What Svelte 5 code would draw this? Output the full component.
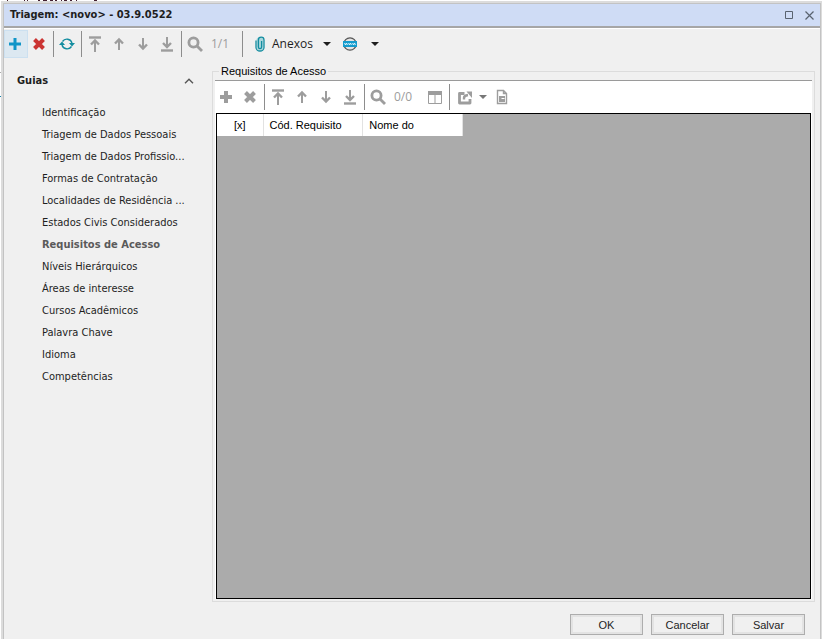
<script>
  const tabs = [
    'Identificação',
    'Triagem de Dados Pessoais',
    'Triagem de Dados Profissio...',
    'Formas de Contratação',
    'Localidades de Residência ...',
    'Estados Civis Considerados',
    'Requisitos de Acesso',
    'Níveis Hierárquicos',
    'Áreas de interesse',
    'Cursos Acadêmicos',
    'Palavra Chave',
    'Idioma',
    'Competências'
  ];
  let current = $state('Requisitos de Acesso');
  let open = $state(true);
</script>

{#snippet icon(name)}
  <svg width="16" height="16" viewBox="0 0 16 16" fill="none" stroke="currentColor" aria-hidden="true">
    {#if name === 'plus'}
      <path d="M8 2v12M2 8h12" stroke-width="3" />
    {:else if name === 'plusBold'}
      <path d="M8 2v12M2 8h12" stroke-width="4" />
    {:else if name === 'cross'}
      <path d="M3.5 3.5l9 9M12.5 3.5l-9 9" stroke-width="4" />
    {:else if name === 'refresh'}
      <path d="M3.500 5.500A5.300 5.300 0 0 1 13 7M12.500 10.500A5.300 5.300 0 0 1 3 9" stroke-width="1.400" />
      <path d="M10 7h6l-3 3.600zM0 9h6L3 5.400z" fill="currentColor" stroke="none" />
    {:else if name === 'first'}
      <path d="M2 1.500h12" stroke-width="2.400" />
      <path d="M8 4v12" stroke-width="2" />
      <path d="M4 8.500L8 4.500l4 4" stroke-width="2.400" />
    {:else if name === 'up'}
      <path d="M8 3v11" stroke-width="2" />
      <path d="M4 7.500L8 3.500l4 4" stroke-width="2.400" />
    {:else if name === 'down'}
      <path d="M8 2v11" stroke-width="2" />
      <path d="M4 8.500l4 4 4-4" stroke-width="2.400" />
    {:else if name === 'last'}
      <path d="M8 1v10" stroke-width="2" />
      <path d="M4 7l4 4 4-4" stroke-width="2.400" />
      <path d="M2 14.500h12" stroke-width="2.400" />
    {:else if name === 'search'}
      <circle cx="6.500" cy="6.500" r="4.600" stroke-width="2.800" />
      <path d="M10 10l5 5" stroke-width="2.800" />
    {:else if name === 'clip'}
      <path d="M4.500 4.500v6.500a3.500 3.500 0 0 0 7 0V4a2.500 2.500 0 0 0-2.500-2.500h-2A2.500 2.500 0 0 0 4.500 4z" fill="#a9d6dc" stroke="none" />
      <path d="M4 4.500V11.500a4 3.500 0 0 0 8 0V4a2.800 2.800 0 0 0-5.600 0v7a1.600 1.600 0 0 0 3.200 0V5" stroke-width="1.300" />
    {:else if name === 'web'}
      <circle cx="8" cy="8" r="6.200" fill="#e4e4e4" stroke="#555" stroke-width="1.200" />
      <path d="M1 5h14v6H1z" fill="#149cce" stroke="none" />
      <path d="M2.500 7l1 2 1-2 1 2M6.500 7l1 2 1-2 1 2M10.500 7l1 2 1-2 1 2" stroke="#fff" stroke-width=".8" />
    {:else if name === 'columns'}
      <path d="M1.500 2.500h13v12h-13zM8 5v9" />
      <path d="M1 2h14v4H1z" fill="currentColor" stroke="none" />
    {:else if name === 'export'}
      <path d="M7.500 4.500H2.500v9.500h10.500v-4" stroke-width="2.800" stroke-linejoin="round" />
      <path d="M7 10.500V9q0-2.500 4-3" stroke-width="2.400" />
      <path d="M9.500 2.500H15V9z" fill="currentColor" stroke="none" />
    {:else if name === 'report'}
      <path d="M3.500 1.500h6l3 3v10h-9zM9.500 1.500v3h3" stroke-width="1.400" />
      <path d="M5 7h6v6H5z" fill="currentColor" stroke="none" />
      <path d="M7.500 9.500h3" stroke="#fff" />
    {/if}
  </svg>
{/snippet}

{#snippet arrow()}
  <svg width="8" height="4" viewBox="0 0 8 4" aria-hidden="true"><path d="M0 0h8L4 4z" fill="currentColor" /></svg>
{/snippet}

{#snippet tool(name, label, tone)}
  <button type="button" class="tool {tone}" aria-label={label}>{@render icon(name)}</button>
{/snippet}

<div class="backdrop">
  <svg class="behind" width="100" height="98" viewBox="0 0 100 98" aria-hidden="true">
    <path d="M7 .5h1M24 .5h1M27 .5h1M38 .5h2M43 .5h4M50 .5h3M55 .5h2M61 .5h1M64 .5h3M70 .5h2M76 .5h1M94 .5h3" stroke="#432030" />
    <path d="M0 72.500h1" stroke="#aaa" />
    <path d="M0 96.500h1" stroke="#1580a8" />
  </svg>
  <main class="window">
    <header class="title">
      <h1>Triagem: &lt;novo&gt; - 03.9.0522</h1>
      <button type="button" aria-label="Maximizar">
        <svg width="9" height="9" viewBox="0 0 9 9"><path d="M.5 .5h7v7h-7z" fill="none" stroke="#59636f" /></svg>
      </button>
      <button type="button" aria-label="Fechar">
        <svg width="9" height="9" viewBox="0 0 9 9"><path d="M.5 .5l8 8M8.500 .5l-8 8" stroke="#59636f" stroke-width="1.200" /></svg>
      </button>
    </header>

    <div class="toolbar" role="toolbar" aria-label="Registro">
      {@render tool('plus', 'Novo', 'blue active')}
      {@render tool('cross', 'Excluir', 'red')}
      <span class="sep"></span>
      {@render tool('refresh', 'Atualizar', 'teal')}
      <span class="sep"></span>
      {@render tool('first', 'Primeiro', '')}
      {@render tool('up', 'Anterior', '')}
      {@render tool('down', 'Próximo', '')}
      {@render tool('last', 'Último', '')}
      <span class="sep"></span>
      {@render tool('search', 'Pesquisar', '')}
      <span class="count">1/1</span>
      <span class="sep"></span>
      <button type="button" class="menu">
        <span class="teal glyph">{@render icon('clip')}</span>
        <span>Anexos</span>
        <span class="caret">{@render arrow()}</span>
      </button>
      <button type="button" class="menu" aria-label="Web">
        {@render icon('web')}
        <span class="caret wide">{@render arrow()}</span>
      </button>
    </div>

    <div class="body">
      <nav>
        <button type="button" class="fold" aria-expanded={open} onclick={() => (open = !open)}>
          <span>Guias</span>
          <svg width="10" height="6" viewBox="0 0 10 6"><path d="M1 5.200l4-4 4 4" fill="none" stroke="#555" stroke-width="1.400" /></svg>
        </button>
        {#if open}
          <ul>
            {#each tabs as tab}
              <li>
                <a href="#guia" class:current={tab === current} onclick={() => (current = tab)}>{tab}</a>
              </li>
            {/each}
          </ul>
        {/if}
      </nav>

      <fieldset>
        <legend>Requisitos de Acesso</legend>
        <div class="panel">
          <div class="toolbar inner" role="toolbar" aria-label="Requisitos">
            {@render tool('plusBold', 'Adicionar', '')}
            {@render tool('cross', 'Remover', '')}
            <span class="sep"></span>
            {@render tool('first', 'Primeiro', '')}
            {@render tool('up', 'Anterior', '')}
            {@render tool('down', 'Próximo', '')}
            {@render tool('last', 'Último', '')}
            <span class="sep"></span>
            {@render tool('search', 'Pesquisar', '')}
            <span class="count">0/0</span>
            {@render tool('columns', 'Colunas', '')}
            <span class="sep"></span>
            <button type="button" class="menu export" aria-label="Exportar">
              {@render icon('export')}
              <span class="caret">{@render arrow()}</span>
            </button>
            {@render tool('report', 'Relatório', '')}
          </div>
          <div class="grid">
            <table>
              <thead>
                <tr><th class="mark">[x]</th><th>Cód. Requisito</th><th>Nome do</th></tr>
              </thead>
            </table>
          </div>
        </div>
      </fieldset>
    </div>

    <footer>
      <button type="button">OK</button>
      <button type="button">Cancelar</button>
      <button type="button">Salvar</button>
    </footer>
  </main>
</div>

<style>
  :global(body) {
    margin: 0;
  }
  .backdrop {
    box-sizing: border-box;
    position: relative;
    min-height: 100vh;
    padding: 1px 0 0 1px;
    display: flex;
    background: #fff;
    font: 11px/14px 'DejaVu Sans Condensed', 'DejaVu Sans', sans-serif;
    color: #1e1e1e;
  }
  .behind {
    position: absolute;
    left: 0;
    top: 0;
  }
  button {
    margin: 0;
    padding: 0;
    border: 0;
    background: none;
    font: inherit;
    color: inherit;
  }
  svg {
    display: block;
    flex: none;
  }
  .window {
    position: relative;
    flex: 1;
    min-width: 0;
    display: flex;
    flex-direction: column;
    background: #f0f0f0;
    border: 1px solid #c3c3c3;
    border-bottom: 0;
    margin: 2px 1px 0 2px;
    box-shadow: 0 0 0 2px #dcdcdc;
  }
  .title {
    display: flex;
    align-items: center;
    gap: 11px;
    height: 22px;
    padding: 0 6px;
    background: #cfdcf5;
    border-bottom: 2px solid #a6a6a6;
  }
  .title h1 {
    flex: 1;
    margin: 0;
    font-size: 11px;
    line-height: 14px;
    font-weight: bold;
  }
  .toolbar {
    display: flex;
    align-items: center;
    height: 29px;
    border-top: 1px solid #fff;
    color: #9d9d9d;
  }
  .tool {
    box-sizing: border-box;
    width: 24px;
    height: 28px;
    padding: 0 5px 0 3px;
  }
  .blue {
    color: #1095c8;
  }
  .active {
    background: #dce8f1;
    box-shadow: inset 0 0 0 1px #cce0f0;
  }
  .red {
    color: #cb3432;
  }
  .teal {
    color: #138da0;
  }
  .sep {
    width: 1px;
    height: 26px;
    margin: 0 2px 0 1px;
    background: #8d8d8d;
  }
  .count {
    box-sizing: border-box;
    width: 33px;
    padding-left: 3px;
    font-family: 'Open Sans', sans-serif;
    font-size: 12px;
  }
  .menu {
    display: flex;
    align-items: center;
    height: 28px;
    padding-left: 7px;
    color: #1e1e1e;
    font-family: 'Open Sans', sans-serif;
    font-size: 12px;
  }
  .glyph {
    padding-right: 4px;
  }
  .caret {
    padding: 0 4px 0 10px;
  }
  .caret.wide {
    padding-left: 13px;
  }
  .body {
    flex: 1;
    display: flex;
    padding: 6px 5px 0 0;
  }
  nav {
    width: 208px;
    flex: none;
  }
  .fold {
    display: flex;
    align-items: center;
    justify-content: space-between;
    width: 100%;
    padding: 10px 18px 0 13px;
    font-weight: bold;
  }
  ul {
    list-style: none;
    margin: 14px 0 0;
    padding: 0 28px 0 38px;
  }
  li a {
    display: block;
    line-height: 22px;
    color: inherit;
    text-decoration: none;
    white-space: nowrap;
  }
  li a.current {
    font-weight: bold;
    color: #5a5a5a;
  }
  fieldset {
    flex: 1;
    min-width: 0;
    margin: 0;
    padding: 2px;
    border: 1px solid #dcdcdc;
    display: flex;
    font: 11px/14px 'Liberation Sans', Arial, sans-serif;
  }
  legend {
    margin-left: 4px;
    padding: 0 2px;
    color: #000;
  }
  .panel {
    flex: 1;
    min-width: 0;
    display: flex;
    flex-direction: column;
    background: #fff;
  }
  .inner {
    height: 32px;
    border-top-color: #9a9a9a;
  }
  .export {
    padding-left: 5px;
    color: #9d9d9d;
  }
  .export .caret {
    padding: 0 4px 0 6px;
    color: #777;
  }
  .grid {
    flex: 1;
    margin: 0 1px;
    border: 1px solid #000;
    background: #ababab;
  }
  table {
    border-collapse: collapse;
    table-layout: fixed;
    width: 246px;
    background: #fff;
  }
  th {
    height: 22px;
    box-sizing: border-box;
    padding: 0 6px;
    border-right: 1px solid #e2e2e2;
    font-weight: normal;
    text-align: left;
    color: #000;
  }
  th.mark {
    width: 46px;
    text-align: center;
  }
  footer {
    display: flex;
    justify-content: flex-end;
    gap: 8px;
    padding: 12px 15px 4px;
    font-family: 'Liberation Sans', Arial, sans-serif;
  }
  footer button {
    width: 73px;
    height: 21px;
    border: 1px solid #adadad;
    box-shadow: inset 0 0 0 2px #e3e3e3;
    background: #f0f0f0;
  }
</style>
